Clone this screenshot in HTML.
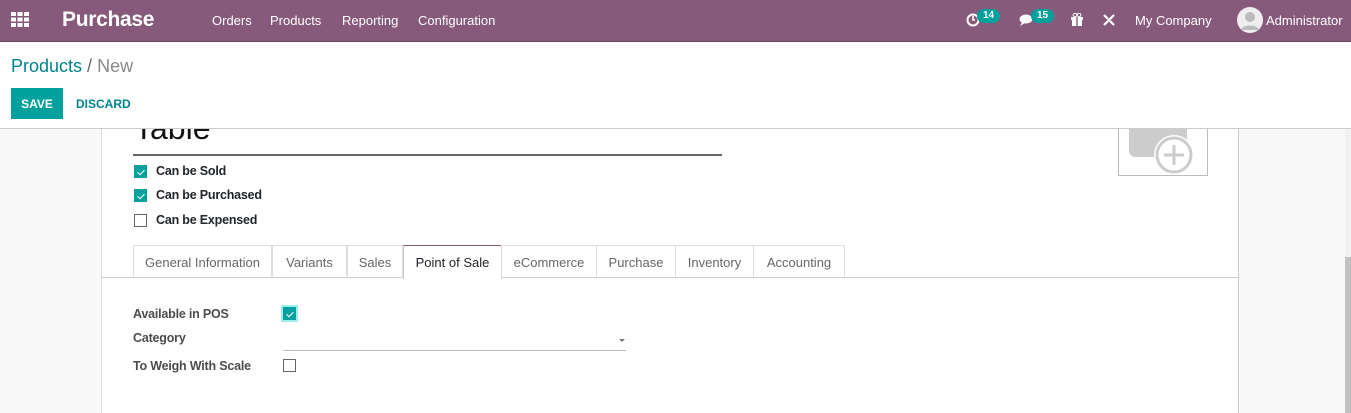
<!DOCTYPE html>
<html><head><meta charset="utf-8"><style>
*{box-sizing:border-box;margin:0;padding:0}
html,body{width:1351px;height:413px;overflow:hidden}
body{background:#f9f9f9;font-family:"Liberation Sans",Roboto,sans-serif;position:relative;color:#212529}
.nav{position:absolute;left:0;top:0;width:1351px;height:42px;background:#875a7b;border-bottom:1px solid #6e4a64;color:#fff}
.nav span{position:absolute;top:13px;font-size:13px}
.cp{position:absolute;left:0;top:42px;width:1351px;height:87px;background:#fff;border-bottom:1px solid #ccc;z-index:2}
.sheet{position:absolute;left:101px;top:100px;width:1138px;height:313px;background:#fff;border-left:1px solid #ddd;border-right:1px solid #ccc}
.cb{position:absolute;width:13px;height:13px;border:1px solid #666;background:#fff}
.cb.on{background:#00a09d;border-color:#00a09d}
.cb.on:after{content:"";position:absolute;left:4px;top:2px;width:3px;height:6px;border:solid #fff;border-width:0 1.5px 1.5px 0;transform:rotate(45deg)}
.lbl{position:absolute;font-size:12.5px;font-weight:bold;color:#212529;letter-spacing:-0.2px}
.tab{position:absolute;top:145px;height:33px;border:1px solid #ddd;border-bottom:none;font-size:13px;color:#666;padding-top:9px;text-align:center}
.tab.act{color:#212529;border-color:#ccc;border-top:1px solid #875a7b;background:#fff;height:34px}
.badge{position:absolute;top:9px;background:#00a09d;color:#fff;font-size:10px;font-weight:bold;border-radius:9px;padding:1px 6px;height:14px}
</style></head><body>
<div class="nav">
 <svg style="position:absolute;left:11px;top:12px" width="18" height="16"><g fill="#fff"><rect x="0" y="0" width="5" height="4"/><rect x="6.5" y="0" width="5" height="4"/><rect x="13" y="0" width="5" height="4"/><rect x="0" y="5.5" width="5" height="4"/><rect x="6.5" y="5.5" width="5" height="4"/><rect x="13" y="5.5" width="5" height="4"/><rect x="0" y="11" width="5" height="4"/><rect x="6.5" y="11" width="5" height="4"/><rect x="13" y="11" width="5" height="4"/></g></svg>
 <span style="left:62px;top:8px;font-size:21px;font-weight:bold;letter-spacing:-0.3px">Purchase</span>
 <span style="left:212px">Orders</span><span style="left:270px">Products</span><span style="left:342px">Reporting</span><span style="left:418px">Configuration</span>
 <svg style="position:absolute;left:966px;top:13px" width="14" height="14"><circle cx="7" cy="7" r="5.5" fill="none" stroke="#fff" stroke-width="2"/><path d="M7 3v4h2" stroke="#fff" stroke-width="1.6" fill="none"/></svg>
 <div class="badge" style="left:977px">14</div>
 <svg style="position:absolute;left:1019px;top:14px" width="16" height="13"><ellipse cx="7" cy="5" rx="6.5" ry="4.5" fill="#fff"/><path d="M3 8l-2 4 5-3z" fill="#fff"/></svg>
 <div class="badge" style="left:1031px">15</div>
 <svg style="position:absolute;left:1070px;top:13px" width="14" height="13"><rect x="1" y="4" width="12" height="3" fill="#fff"/><rect x="2" y="7" width="10" height="6" fill="#fff"/><rect x="6.3" y="4" width="1.4" height="9" fill="#875a7b"/><circle cx="5" cy="2" r="1.8" fill="none" stroke="#fff"/><circle cx="9" cy="2" r="1.8" fill="none" stroke="#fff"/></svg>
 <svg style="position:absolute;left:1102px;top:13px" width="14" height="14"><path d="M2 12L12 2M2 2l4 4M8 8l4 4" stroke="#fff" stroke-width="2.2"/></svg>
 <span style="left:1135px">My Company</span>
 <svg style="position:absolute;left:1237px;top:7px" width="26" height="26"><circle cx="13" cy="13" r="13" fill="#eee"/><circle cx="13" cy="10" r="5" fill="#bbb"/><path d="M4 23c2-6 16-6 18 0z" fill="#bbb"/></svg>
 <span style="left:1266px">Administrator</span>
</div>
<div class="cp">
 <div style="position:absolute;left:11px;top:14px;font-size:18px;color:#00838f">Products <span style="color:#666">/</span> <span style="color:#888">New</span></div>
 <div style="position:absolute;left:11px;top:46px;width:52px;height:31px;background:#00a09d;color:#fff;font-size:12px;font-weight:bold;text-align:center;padding-top:9px">SAVE</div>
 <div style="position:absolute;left:76px;top:55px;color:#00838f;font-size:12px;font-weight:bold">DISCARD</div>
</div>
<div class="sheet">
 <div style="position:absolute;left:32px;top:10px;font-size:32px;color:#111">Table</div>
 <div style="position:absolute;left:31px;top:54px;width:589px;height:2px;background:#666"></div>
 <div style="position:absolute;left:1016px;top:10px;width:90px;height:66px;border:1px solid #bbb"><svg width="90" height="66"><rect x="10" y="0" width="58" height="46" rx="6" fill="#ccc"/><circle cx="55" cy="44" r="20" fill="#fff"/><circle cx="55" cy="44" r="17" fill="none" stroke="#ccc" stroke-width="3"/><path d="M55 34v20M45 44h20" stroke="#ccc" stroke-width="3"/></svg></div>
 <div class="cb on" style="left:32px;top:65px"></div><div class="lbl" style="left:54px;top:64px">Can be Sold</div>
 <div class="cb on" style="left:32px;top:89px"></div><div class="lbl" style="left:54px;top:88px">Can be Purchased</div>
 <div class="cb" style="left:32px;top:114px"></div><div class="lbl" style="left:54px;top:113px">Can be Expensed</div>
 <div style="position:absolute;left:0;top:177px;width:1137px;height:1px;background:#ccc"></div>
 <div class="tab" style="left:31px;width:139px">General Information</div>
 <div class="tab" style="left:170px;width:75px">Variants</div>
 <div class="tab" style="left:245px;width:56px">Sales</div>
 <div class="tab act" style="left:301px;width:99px">Point of Sale</div>
 <div class="tab" style="left:399px;width:96px">eCommerce</div>
 <div class="tab" style="left:494px;width:80px">Purchase</div>
 <div class="tab" style="left:573px;width:79px">Inventory</div>
 <div class="tab" style="left:651px;width:92px">Accounting</div>
 <div class="lbl" style="left:31px;top:207px;color:#4c4c4c">Available in POS</div>
 <div class="cb on" style="left:181px;top:207px;box-shadow:0 0 0 2px #9ee"></div>
 <div class="lbl" style="left:31px;top:231px;color:#4c4c4c">Category</div>
 <div style="position:absolute;left:181px;top:250px;width:343px;height:1px;background:#bbb"></div>
 <div style="position:absolute;left:517px;top:239px;border:3px solid transparent;border-top:3px solid #777"></div>
 <div class="lbl" style="left:31px;top:259px;color:#4c4c4c">To Weigh With Scale</div>
 <div class="cb" style="left:181px;top:259px"></div>
</div>
<div style="position:absolute;left:1345px;top:129px;width:6px;height:284px;background:#f1f1f1"></div>
<div style="position:absolute;left:1345px;top:257px;width:6px;height:156px;background:#c1c1c1"></div>
</body></html>
